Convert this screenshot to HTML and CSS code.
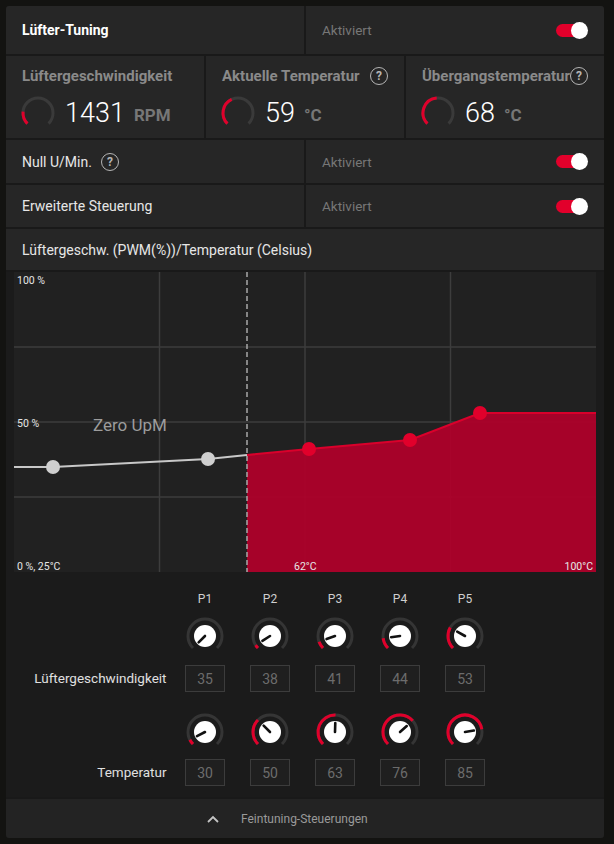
FILE: index.html
```html
<!DOCTYPE html>
<html lang="de">
<head>
<meta charset="utf-8">
<title>Lüfter-Tuning</title>
<link rel="stylesheet" href="styles.css">
</head>
<body>
<div class="panel">
  <div class="row cols-2 h-48">
    <div class="cell"><span class="title">Lüfter-Tuning</span></div>
    <div class="cell split"><span class="muted">Aktiviert</span><span class="toggle"><span class="knob"></span></span></div>
  </div>

  <div class="row cols-3 h-82">
    <div class="cell stat">
      <div class="stat-head"><span class="stat-label">Lüftergeschwindigkeit</span></div>
      <div class="stat-body">
        <svg class="gauge" width="36" height="36" viewBox="0 0 36 36">
          <path d="M7.39 28.61 A15 15 0 1 1 28.61 28.61" fill="none" stroke="#3a3a3a" stroke-width="3"/>
          <path d="M7.39 28.61 A15 15 0 0 1 3.06 16.69" fill="none" stroke="#e0002b" stroke-width="3"/>
        </svg>
        <span class="value">1431</span><span class="unit">RPM</span>
      </div>
    </div>
    <div class="cell stat">
      <div class="stat-head"><span class="stat-label">Aktuelle Temperatur</span><span class="help">?</span></div>
      <div class="stat-body">
        <svg class="gauge" width="36" height="36" viewBox="0 0 36 36">
          <path d="M7.39 28.61 A15 15 0 1 1 28.61 28.61" fill="none" stroke="#3a3a3a" stroke-width="3"/>
          <path d="M7.39 28.61 A15 15 0 0 1 11.66 4.41" fill="none" stroke="#e0002b" stroke-width="3"/>
        </svg>
        <span class="value">59</span><span class="unit">°C</span>
      </div>
    </div>
    <div class="cell stat">
      <div class="stat-head"><span class="stat-label">Übergangstemperatur</span><span class="help">?</span></div>
      <div class="stat-body">
        <svg class="gauge" width="36" height="36" viewBox="0 0 36 36">
          <path d="M7.39 28.61 A15 15 0 1 1 28.61 28.61" fill="none" stroke="#3a3a3a" stroke-width="3"/>
          <path d="M7.39 28.61 A15 15 0 0 1 16.69 3.06" fill="none" stroke="#e0002b" stroke-width="3"/>
        </svg>
        <span class="value">68</span><span class="unit">°C</span>
      </div>
    </div>
  </div>

  <div class="row cols-2 h-43">
    <div class="cell"><span class="text">Null U/Min.</span><span class="help help-inline">?</span></div>
    <div class="cell split"><span class="muted">Aktiviert</span><span class="toggle"><span class="knob"></span></span></div>
  </div>

  <div class="row cols-2 h-42">
    <div class="cell"><span class="text">Erweiterte Steuerung</span></div>
    <div class="cell split"><span class="muted">Aktiviert</span><span class="toggle"><span class="knob"></span></span></div>
  </div>

  <div class="row h-41">
    <div class="cell"><span class="text">Lüftergeschw. (PWM(%))/Temperatur (Celsius)</span></div>
  </div>

  <div class="curve-area">
    <svg class="chart" width="582" height="300" viewBox="0 0 582 300">
      <rect x="0" y="0" width="582" height="300" fill="#212121"/>
      <g stroke="#3d3d3d" stroke-width="1.5">
        <line x1="145.5" y1="0" x2="145.5" y2="300"/>
        <line x1="291" y1="0" x2="291" y2="300"/>
        <line x1="436.5" y1="0" x2="436.5" y2="300"/>
        <line x1="0" y1="75" x2="582" y2="75"/>
        <line x1="0" y1="150" x2="582" y2="150"/>
        <line x1="0" y1="225" x2="582" y2="225"/>
      </g>
      <polygon points="233,183 295,177 396,168 466,141 582,141 582,300 233,300" fill="#b0002a" fill-opacity="0.93"/>
      <polyline points="233,183 295,177 396,168 466,141 582,141" fill="none" stroke="#d9002b" stroke-width="2"/>
      <line x1="233" y1="0" x2="233" y2="300" stroke="#a8a8a8" stroke-width="1.5" stroke-dasharray="5 3"/>
      <polyline points="0,195 39,195 194,187 233,183" fill="none" stroke="#c8c8c8" stroke-width="2"/>
      <circle cx="39" cy="195" r="7" fill="#cfcfcf"/>
      <circle cx="194" cy="187" r="7" fill="#cfcfcf"/>
      <circle cx="295" cy="177" r="7" fill="#e1002b"/>
      <circle cx="396" cy="168" r="7" fill="#e1002b"/>
      <circle cx="466" cy="141" r="7" fill="#e1002b"/>
      <g class="axis" fill="#e6e6e6" font-size="10.5">
        <text x="3" y="12">100 %</text>
        <text x="3" y="155">50 %</text>
        <text x="3" y="298">0 %, 25°C</text>
        <text x="280" y="298">62°C</text>
        <text x="579" y="298" text-anchor="end">100°C</text>
      </g>
      <text class="zero" x="79" y="159" fill="#9c9c9c" font-size="17">Zero UpM</text>
    </svg>

    <div class="knobs">
      <span class="blank"></span>
      <span class="plabel">P1</span><span class="plabel">P2</span><span class="plabel">P3</span><span class="plabel">P4</span><span class="plabel">P5</span>

      <span class="blank"></span>
      <svg class="knob-svg" width="40" height="40" viewBox="0 0 40 40"><path d="M7.98 32.02 A17 17 0 1 1 32.02 32.02" class="ring"/><circle cx="20" cy="20" r="11" class="dial"/><line x1="20" y1="20" x2="13.64" y2="26.36" class="ptr"/></svg>
      <svg class="knob-svg" width="40" height="40" viewBox="0 0 40 40"><path d="M7.98 32.02 A17 17 0 1 1 32.02 32.02" class="ring"/><path d="M7.98 32.02 A17 17 0 0 1 5.66 29.13" class="fill"/><circle cx="20" cy="20" r="11" class="dial"/><line x1="20" y1="20" x2="12.41" y2="24.84" class="ptr"/></svg>
      <svg class="knob-svg" width="40" height="40" viewBox="0 0 40 40"><path d="M7.98 32.02 A17 17 0 1 1 32.02 32.02" class="ring"/><path d="M7.98 32.02 A17 17 0 0 1 4.04 25.84" class="fill"/><circle cx="20" cy="20" r="11" class="dial"/><line x1="20" y1="20" x2="11.55" y2="23.09" class="ptr"/></svg>
      <svg class="knob-svg" width="40" height="40" viewBox="0 0 40 40"><path d="M7.98 32.02 A17 17 0 1 1 32.02 32.02" class="ring"/><path d="M7.98 32.02 A17 17 0 0 1 3.15 22.25" class="fill"/><circle cx="20" cy="20" r="11" class="dial"/><line x1="20" y1="20" x2="11.08" y2="21.19" class="ptr"/></svg>
      <svg class="knob-svg" width="40" height="40" viewBox="0 0 40 40"><path d="M7.98 32.02 A17 17 0 1 1 32.02 32.02" class="ring"/><path d="M7.98 32.02 A17 17 0 0 1 5.25 11.55" class="fill"/><circle cx="20" cy="20" r="11" class="dial"/><line x1="20" y1="20" x2="12.19" y2="15.53" class="ptr"/></svg>

      <span class="rowlabel">Lüftergeschwindigkeit</span>
      <span class="box">35</span><span class="box">38</span><span class="box">41</span><span class="box">44</span><span class="box">53</span>

      <span class="blank"></span>
      <svg class="knob-svg" width="40" height="40" viewBox="0 0 40 40"><path d="M7.98 32.02 A17 17 0 1 1 32.02 32.02" class="ring"/><path d="M7.98 32.02 A17 17 0 0 1 4.85 27.72" class="fill"/><circle cx="20" cy="20" r="11" class="dial"/><line x1="20" y1="20" x2="11.98" y2="24.09" class="ptr"/></svg>
      <svg class="knob-svg" width="40" height="40" viewBox="0 0 40 40"><path d="M7.98 32.02 A17 17 0 1 1 32.02 32.02" class="ring"/><path d="M7.98 32.02 A17 17 0 0 1 7.98 7.98" class="fill"/><circle cx="20" cy="20" r="11" class="dial"/><line x1="20" y1="20" x2="13.64" y2="13.64" class="ptr"/></svg>
      <svg class="knob-svg" width="40" height="40" viewBox="0 0 40 40"><path d="M7.98 32.02 A17 17 0 1 1 32.02 32.02" class="ring"/><path d="M7.98 32.02 A17 17 0 0 1 20.53 3.01" class="fill"/><circle cx="20" cy="20" r="11" class="dial"/><line x1="20" y1="20" x2="20.28" y2="11" class="ptr"/></svg>
      <svg class="knob-svg" width="40" height="40" viewBox="0 0 40 40"><path d="M7.98 32.02 A17 17 0 1 1 32.02 32.02" class="ring"/><path d="M7.98 32.02 A17 17 0 1 1 32.75 8.76" class="fill"/><circle cx="20" cy="20" r="11" class="dial"/><line x1="20" y1="20" x2="26.75" y2="14.05" class="ptr"/></svg>
      <svg class="knob-svg" width="40" height="40" viewBox="0 0 40 40"><path d="M7.98 32.02 A17 17 0 1 1 32.02 32.02" class="ring"/><path d="M7.98 32.02 A17 17 0 1 1 36.79 17.34" class="fill"/><circle cx="20" cy="20" r="11" class="dial"/><line x1="20" y1="20" x2="28.89" y2="18.59" class="ptr"/></svg>

      <span class="rowlabel">Temperatur</span>
      <span class="box">30</span><span class="box">50</span><span class="box">63</span><span class="box">76</span><span class="box">85</span>
    </div>
  </div>

  <div class="footer">
    <svg class="chev" width="12" height="8" viewBox="0 0 12 8"><polyline points="1,7 6,2 11,7" fill="none" stroke="#c4c4c4" stroke-width="1.8"/></svg>
    <span class="footer-text">Feintuning-Steuerungen</span>
  </div>
</div>
</body>
</html>
```

FILE: styles.css
```css
* { box-sizing: border-box; }

html, body {
  margin: 0;
  padding: 0;
  background: #131311;
  font-family: Roboto, "Noto Sans", "DejaVu Sans", sans-serif;
  color: #e8e8e8;
}

.panel {
  margin: 6px 0 0 6px;
  width: 598px;
  height: 832px;
  background: #191919;
  border-radius: 3px;
  overflow: hidden;
  display: flex;
  flex-direction: column;
  gap: 2px;
}

.row { display: grid; gap: 2px; }
.cols-2 { grid-template-columns: 1fr 1fr; }
.cols-3 { grid-template-columns: 1fr 1fr 1fr; }
.h-48 { height: 48px; }
.h-82 { height: 82px; }
.h-43 { height: 43px; }
.h-42 { height: 42px; }
.h-41 { height: 41px; }

.cell {
  background: #262626;
  display: flex;
  align-items: center;
  padding: 0 16px;
}

.split { justify-content: space-between; }

.title { font-weight: 700; font-size: 14px; color: #ffffff; }
.text { font-size: 14px; color: #e6e6e6; }
.muted { font-size: 13.5px; color: #777777; }

.toggle {
  position: relative;
  width: 32px;
  height: 17px;
  display: inline-block;
}
.toggle::before {
  content: "";
  position: absolute;
  left: 0;
  top: 2px;
  width: 28px;
  height: 13px;
  border-radius: 7px;
  background: #e2002b;
}
.toggle .knob {
  position: absolute;
  right: 0;
  top: 0;
  width: 17px;
  height: 17px;
  border-radius: 50%;
  background: #ffffff;
}

.stat {
  flex-direction: column;
  align-items: stretch;
  justify-content: flex-start;
  padding-top: 10px;
}
.stat-head {
  display: flex;
  justify-content: space-between;
  align-items: center;
  height: 20px;
}
.stat-label { font-weight: 700; font-size: 15px; color: #8a8a8a; }
.stat-body {
  display: flex;
  align-items: center;
  margin-top: 9px;
  margin-left: -2px;
}
.gauge { flex: none; }
.value {
  font-size: 27px;
  font-weight: 300;
  color: #ffffff;
  margin-left: 9px;
}
.unit {
  font-size: 17px;
  font-weight: 700;
  color: #777777;
  margin-left: 9px;
  margin-top: 4px;
}

.help {
  width: 18px;
  height: 18px;
  border-radius: 50%;
  border: 1.7px solid #b5b5b5;
  color: #b5b5b5;
  font-size: 12px;
  font-weight: 700;
  display: inline-flex;
  align-items: center;
  justify-content: center;
  flex: none;
}
.help-inline { margin-left: 9px; }

.curve-area {
  height: 525px;
  background: #1b1b1b;
  display: flex;
  flex-direction: column;
  padding: 0 8px;
}
.chart { display: block; flex: none; }
.chart text { font-family: Roboto, "Noto Sans", sans-serif; }

.knobs {
  display: grid;
  grid-template-columns: 166.5px repeat(5, 65px);
  grid-template-rows: 18px 48px 36px 60px 34px;
  margin-left: -8px;
  padding-top: 18px;
  align-items: end;
  justify-items: center;
}
.plabel {
  font-size: 12px;
  color: #cfcfcf;
  line-height: 18px;
}
.rowlabel {
  justify-self: end;
  padding-right: 6px;
  font-size: 13.5px;
  color: #e0e0e0;
  line-height: 27px;
}
.knob-svg { display: block; }
.knob-svg .ring { fill: none; stroke: #353535; stroke-width: 3; }
.knob-svg .fill { fill: none; stroke: #e0002b; stroke-width: 3; }
.knob-svg .dial { fill: #ffffff; }
.knob-svg .ptr { stroke: #111111; stroke-width: 2.6; stroke-linecap: round; }

.box {
  width: 40px;
  height: 27px;
  border: 1px solid #3c3c3c;
  background: #1f1f1f;
  color: #6c6c6c;
  font-size: 14px;
  display: flex;
  align-items: center;
  justify-content: center;
}

.footer {
  flex: 1;
  background: #232323;
  display: flex;
  align-items: center;
  padding-left: 201px;
}
.chev { flex: none; }
.footer-text {
  margin-left: 22px;
  font-size: 12px;
  color: #9a9a9a;
}
```
